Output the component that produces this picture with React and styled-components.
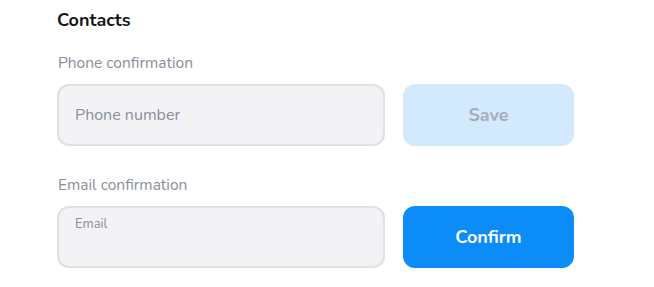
import React from 'react';
import styled, { createGlobalStyle } from 'styled-components';

const GlobalStyle = createGlobalStyle`
    body {
        margin: 0;
        background: #ffffff;
        font-family: "Nunito", "Lato", "Noto Sans", sans-serif;
    }
`;

const Section = styled.section`
    padding: 9px 0 0 57px;
    display: flex;
    flex-direction: column;
`;

const Title = styled.h2`
    margin: 0;
    font-size: 18px;
    font-weight: 700;
    line-height: 22px;
    color: #14161c;
`;

const Group = styled.div`
    margin-top: ${props => props.$top}px;
    display: flex;
    flex-direction: column;
`;

const Label = styled.div`
    font-size: 15.5px;
    line-height: 20px;
    color: #8a8e9c;
    margin-bottom: 11px;
    padding-left: 1px;
`;

const Row = styled.div`
    display: flex;
    gap: 18px;
`;

const Field = styled.div`
    width: 328px;
    height: 62px;
    box-sizing: border-box;
    border: 2px solid #dfe0e4;
    border-radius: 12px;
    background: #f3f3f6;
    padding: ${props => (props.$small ? '7px 16px' : '0 16px')};
    display: flex;
    align-items: ${props => (props.$small ? 'flex-start' : 'center')};
    font-size: ${props => (props.$small ? '13px' : '16px')};
    color: #8a8e9c;
`;

const Button = styled.button`
    width: 171px;
    height: 62px;
    border: none;
    border-radius: 12px;
    font-family: inherit;
    font-size: 18px;
    font-weight: 700;
    background: ${props => (props.$disabled ? '#d3e9fd' : '#0b8cf8')};
    color: ${props => (props.$disabled ? '#a7abb8' : '#ffffff')};
    cursor: pointer;
`;

const App = () => {
    return (
        <>
            <GlobalStyle />
            <Section>
                <Title>Contacts</Title>
                <Group $top={22}>
                    <Label>Phone confirmation</Label>
                    <Row>
                        <Field>Phone number</Field>
                        <Button $disabled>Save</Button>
                    </Row>
                </Group>
                <Group $top={29}>
                    <Label>Email confirmation</Label>
                    <Row>
                        <Field $small>Email</Field>
                        <Button>Confirm</Button>
                    </Row>
                </Group>
            </Section>
        </>
    );
};

export default App;
